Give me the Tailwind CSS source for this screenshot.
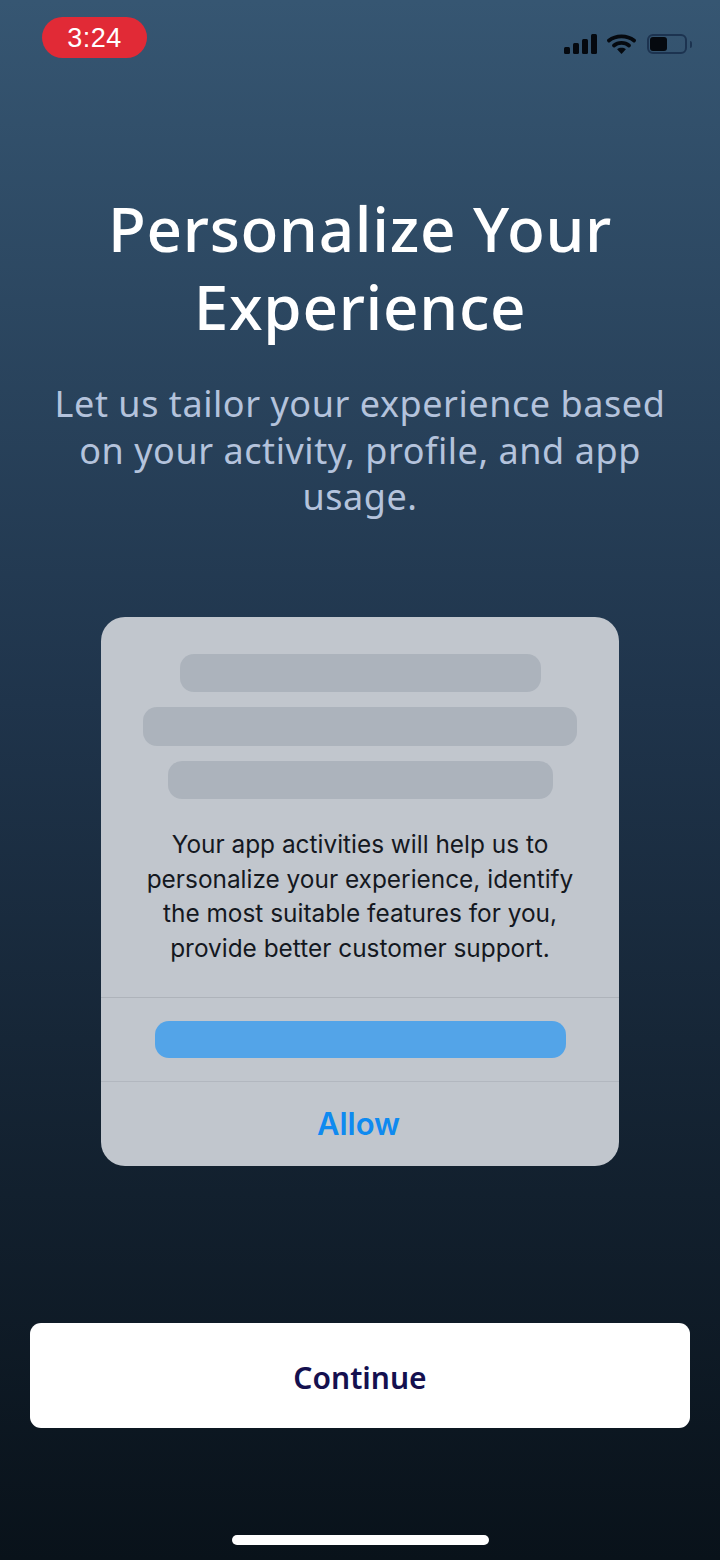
<!DOCTYPE html>
<html lang="en">
<head>
<meta charset="utf-8">
<title>Personalize Your Experience</title>
<script src="https://cdn.jsdelivr.net/npm/@tailwindcss/browser@4"></script>
</head>
<body class="m-0">
<main class="w-[720px] h-[1560px] overflow-hidden flex flex-col items-center bg-gradient-to-b from-[#365672] via-[#1f344b] via-45% to-[#09121a] font-['Noto_Sans',sans-serif]">
  <header class="w-full h-[75px] pt-[17px] pl-[42px] pr-[28px] flex justify-between items-start">
    <div class="w-[105px] h-[41px] rounded-full bg-[#e12a36] flex items-center justify-center text-white text-[27px] pt-[2px] font-['Liberation_Sans',sans-serif] tracking-[0.5px]">3:24</div>
    <div class="flex items-start mt-[17px]">
      <svg width="33" height="20" viewBox="0 0 33 20" fill="#05090f"><rect x="0" y="13" width="6" height="7" rx="1.5"/><rect x="9" y="9" width="6" height="11" rx="1.5"/><rect x="18" y="5" width="6" height="15" rx="1.5"/><rect x="27" y="0" width="6" height="20" rx="1.5"/></svg>
      <svg class="ml-[10px]" width="29" height="20" viewBox="0 0 29 20" fill="none" stroke="#05090f" stroke-width="3.8" stroke-linecap="round"><path d="M2 6.5C9 1 20 1 27 6.5"/><path d="M7 11.5C11 8 18 8 22 11.5"/><path d="M14.5 20l-4.4-4.8c2.5-1.9 6.3-1.9 8.8 0z" fill="#05090f" stroke="none"/></svg>
      <div class="flex items-center ml-[11px]">
        <div class="w-[40px] h-[20px] rounded-[6px] border-2 border-[#1c3350] pl-[1px] py-[1px]"><div class="w-[17px] h-full rounded-[3px] bg-[#05090f]"></div></div>
        <div class="ml-[3px] w-[2px] h-[7px] rounded-r-full bg-[#1c3350]"></div>
      </div>
    </div>
  </header>

  <h1 class="mt-[114px] w-[600px] text-center text-white text-[62px] tracking-[0.7px] leading-[78px] font-medium">Personalize Your Experience</h1>
  <p class="mt-[36px] w-[640px] text-center text-[#b4c3dc] text-[36px] tracking-[0.55px] leading-[46.67px]">Let us tailor your experience based on your activity, profile, and app usage.</p>

  <section class="mt-[96px] w-[518px] h-[549px] rounded-[24px] bg-[#c1c6cd] flex flex-col items-center">
    <div class="mt-[37px] w-[361px] h-[38px] rounded-[14px] bg-[#acb3bc]"></div>
    <div class="mt-[15px] w-[434px] h-[39px] rounded-[14px] bg-[#acb3bc]"></div>
    <div class="mt-[15px] w-[385px] h-[38px] rounded-[14px] bg-[#acb3bc]"></div>
    <p class="mt-[28px] w-[460px] text-center text-[#14181f] text-[24.4px] leading-[34.5px] font-['Inter',sans-serif]">Your app activities will help us to personalize your experience, identify the most suitable features for you, provide better customer support.</p>
    <div class="mt-[32px] w-full h-px bg-[#aeb3ba]"></div>
    <div class="mt-[23px] w-[411px] h-[37px] rounded-[14px] bg-[#53a4e8]"></div>
    <div class="mt-[23px] w-full h-px bg-[#b2b7bf]"></div>
    <div class="flex-1 flex items-center justify-center text-[#0f8af0] text-[31px] font-semibold font-['Inter',sans-serif] pr-[3px]">Allow</div>
  </section>

  <button class="mt-[157px] w-[660px] h-[105px] rounded-[11px] bg-white text-[#14104f] text-[30px] font-semibold pt-[3px]">Continue</button>
  <div class="mt-[107px] w-[257px] h-[10px] rounded-full bg-white"></div>
</main>
</body>
</html>
